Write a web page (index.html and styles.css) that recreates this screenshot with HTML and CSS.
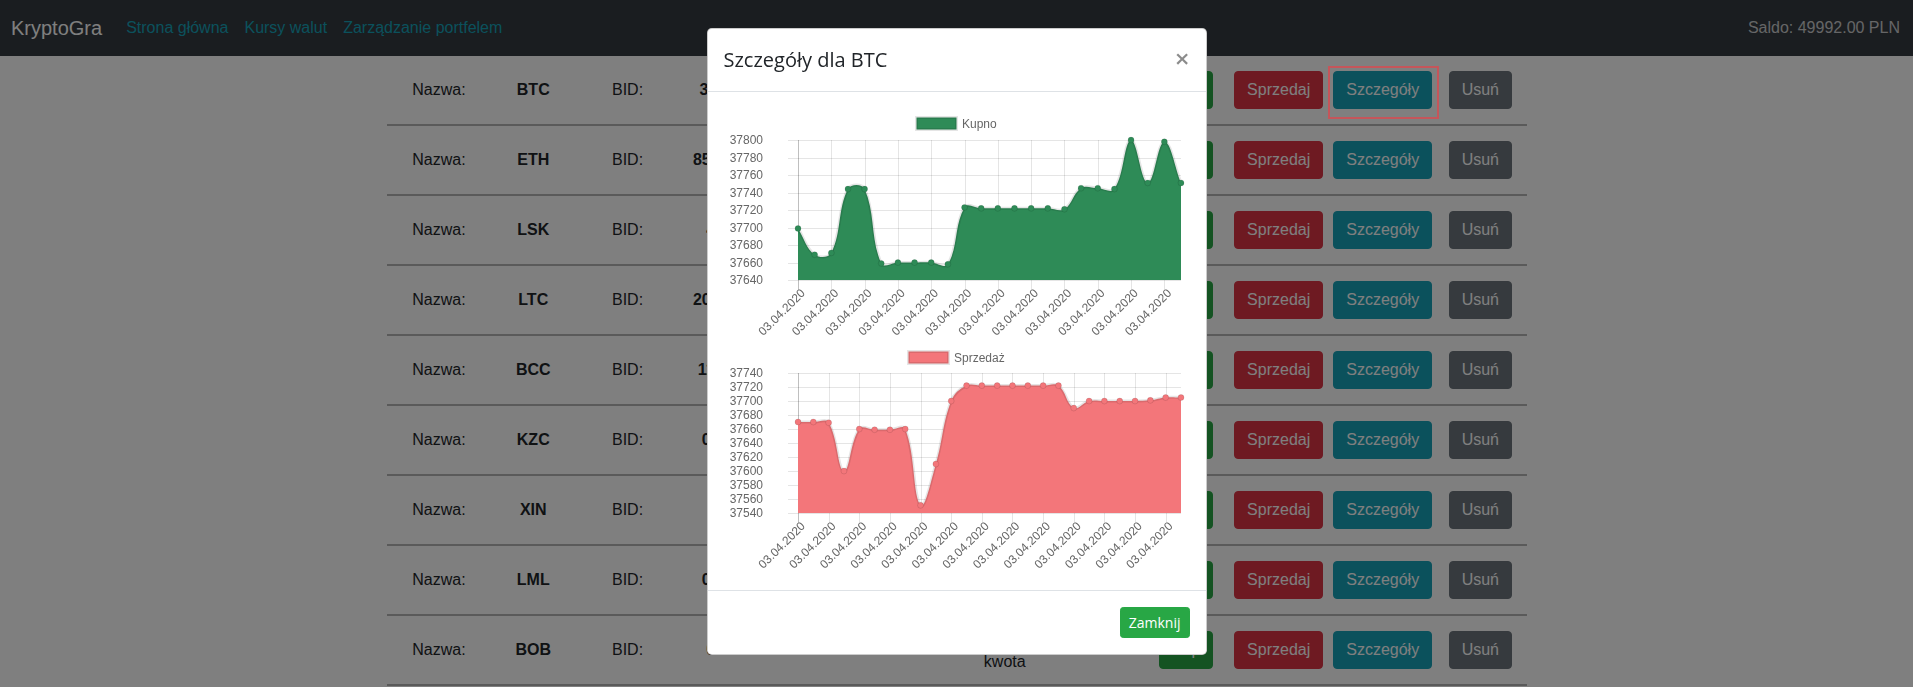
FILE: index.html
```html
<!DOCTYPE html>
<html lang="pl">
<head>
<meta charset="utf-8">
<title>KryptoGra</title>
<link rel="stylesheet" href="styles.css">
</head>
<body>
<nav class="navbar">
  <a class="brand" href="#">KryptoGra</a>
  <ul class="nav">
    <li><a href="#">Strona główna</a></li>
    <li><a href="#">Kursy walut</a></li>
    <li><a href="#">Zarządzanie portfelem</a></li>
  </ul>
  <span class="saldo">Saldo: 49992.00 PLN</span>
</nav>

<main class="container">
  <div class="coin-row"><span>Nazwa:</span><b>BTC</b><span>BID:</span><b>37699</b><span>ASK:</span><b>37722</b><span class="two-line">Posiadana kwota</span><span>0</span><button class="btn btn-success">Kup</button><button class="btn btn-danger">Sprzedaj</button><button class="btn btn-info highlight">Szczegóły</button><button class="btn btn-secondary">Usuń</button></div>
  <div class="coin-row"><span>Nazwa:</span><b>ETH</b><span>BID:</span><b>859.123</b><span>ASK:</span><b>861.452</b><span class="two-line">Posiadana kwota</span><span>0</span><button class="btn btn-success">Kup</button><button class="btn btn-danger">Sprzedaj</button><button class="btn btn-info">Szczegóły</button><button class="btn btn-secondary">Usuń</button></div>
  <div class="coin-row"><span>Nazwa:</span><b>LSK</b><span>BID:</span><b>4.01</b><span>ASK:</span><b>4.06</b><span class="two-line">Posiadana kwota</span><span>0</span><button class="btn btn-success">Kup</button><button class="btn btn-danger">Sprzedaj</button><button class="btn btn-info">Szczegóły</button><button class="btn btn-secondary">Usuń</button></div>
  <div class="coin-row"><span>Nazwa:</span><b>LTC</b><span>BID:</span><b>205.481</b><span>ASK:</span><b>206.112</b><span class="two-line">Posiadana kwota</span><span>0</span><button class="btn btn-success">Kup</button><button class="btn btn-danger">Sprzedaj</button><button class="btn btn-info">Szczegóły</button><button class="btn btn-secondary">Usuń</button></div>
  <div class="coin-row"><span>Nazwa:</span><b>BCC</b><span>BID:</span><b>1102.4</b><span>ASK:</span><b>1108.7</b><span class="two-line">Posiadana kwota</span><span>0</span><button class="btn btn-success">Kup</button><button class="btn btn-danger">Sprzedaj</button><button class="btn btn-info">Szczegóły</button><button class="btn btn-secondary">Usuń</button></div>
  <div class="coin-row"><span>Nazwa:</span><b>KZC</b><span>BID:</span><b>0.084</b><span>ASK:</span><b>0.086</b><span class="two-line">Posiadana kwota</span><span>0</span><button class="btn btn-success">Kup</button><button class="btn btn-danger">Sprzedaj</button><button class="btn btn-info">Szczegóły</button><button class="btn btn-secondary">Usuń</button></div>
  <div class="coin-row"><span>Nazwa:</span><b>XIN</b><span>BID:</span><b>0.5</b><span>ASK:</span><b>0.6</b><span class="two-line">Posiadana kwota</span><span>0</span><button class="btn btn-success">Kup</button><button class="btn btn-danger">Sprzedaj</button><button class="btn btn-info">Szczegóły</button><button class="btn btn-secondary">Usuń</button></div>
  <div class="coin-row"><span>Nazwa:</span><b>LML</b><span>BID:</span><b>0.032</b><span>ASK:</span><b>0.035</b><span class="two-line">Posiadana kwota</span><span>0</span><button class="btn btn-success">Kup</button><button class="btn btn-danger">Sprzedaj</button><button class="btn btn-info">Szczegóły</button><button class="btn btn-secondary">Usuń</button></div>
  <div class="coin-row"><span>Nazwa:</span><b>BOB</b><span>BID:</span><b>0.07</b><span>ASK:</span><b>0.07</b><span class="two-line">Posiadana kwota</span><span>0</span><button class="btn btn-success">Kup</button><button class="btn btn-danger">Sprzedaj</button><button class="btn btn-info">Szczegóły</button><button class="btn btn-secondary">Usuń</button></div>
</main>

<div class="backdrop"></div>

<div class="modal">
  <div class="modal-dialog">
    <div class="modal-content">
      <div class="modal-header">
        <h5 class="modal-title">Szczegóły dla BTC</h5>
        <button class="close" type="button">×</button>
      </div>
      <div class="modal-body">
        <svg class="chart chart-buy" width="466" height="233" viewBox="0 0 466 233"
             data-min="37640" data-max="37800"
             data-values="37699,37669,37671,37744,37744,37659,37660,37660,37660,37658,37723,37722,37722,37722,37722,37722,37721,37745,37745,37744,37800,37751,37798,37751">
          <g class="grid"></g>
          <g class="y-labels">
            <text x="39" y="36">37800</text>
            <text x="39" y="53.5">37780</text>
            <text x="39" y="71">37760</text>
            <text x="39" y="88.5">37740</text>
            <text x="39" y="106">37720</text>
            <text x="39" y="123.5">37700</text>
            <text x="39" y="141">37680</text>
            <text x="39" y="158.5">37660</text>
            <text x="39" y="176">37640</text>
          </g>
          <g class="x-labels">
            <text transform="translate(79,183) rotate(-45)">03.04.2020</text>
            <text transform="translate(112.3,183) rotate(-45)">03.04.2020</text>
            <text transform="translate(145.6,183) rotate(-45)">03.04.2020</text>
            <text transform="translate(178.9,183) rotate(-45)">03.04.2020</text>
            <text transform="translate(212.2,183) rotate(-45)">03.04.2020</text>
            <text transform="translate(245.5,183) rotate(-45)">03.04.2020</text>
            <text transform="translate(278.8,183) rotate(-45)">03.04.2020</text>
            <text transform="translate(312.1,183) rotate(-45)">03.04.2020</text>
            <text transform="translate(345.4,183) rotate(-45)">03.04.2020</text>
            <text transform="translate(378.7,183) rotate(-45)">03.04.2020</text>
            <text transform="translate(412,183) rotate(-45)">03.04.2020</text>
            <text transform="translate(445.3,183) rotate(-45)">03.04.2020</text>
          </g>
          <path class="area"></path>
          <path class="line"></path>
          <g class="points"></g>
          <g class="legend">
            <rect x="192.5" y="9.5" width="40" height="12"></rect>
            <text x="238" y="19.5">Kupno</text>
          </g>
        </svg>
        <svg class="chart chart-sell" width="466" height="233" viewBox="0 0 466 233"
             data-min="37540" data-max="37740"
             data-values="37670,37670,37669,37600,37660,37659,37659,37660,37551,37610,37700,37722,37722,37722,37722,37722,37722,37722,37690,37700,37700,37700,37700,37701,37705,37705">
          <g class="grid"></g>
          <g class="y-labels">
            <text x="39" y="36">37740</text>
            <text x="39" y="50">37720</text>
            <text x="39" y="64">37700</text>
            <text x="39" y="78">37680</text>
            <text x="39" y="92">37660</text>
            <text x="39" y="106">37640</text>
            <text x="39" y="120">37620</text>
            <text x="39" y="134">37600</text>
            <text x="39" y="148">37580</text>
            <text x="39" y="162">37560</text>
            <text x="39" y="176">37540</text>
          </g>
          <g class="x-labels">
            <text transform="translate(79,183) rotate(-45)">03.04.2020</text>
            <text transform="translate(109.6,183) rotate(-45)">03.04.2020</text>
            <text transform="translate(140.3,183) rotate(-45)">03.04.2020</text>
            <text transform="translate(170.9,183) rotate(-45)">03.04.2020</text>
            <text transform="translate(201.6,183) rotate(-45)">03.04.2020</text>
            <text transform="translate(232.2,183) rotate(-45)">03.04.2020</text>
            <text transform="translate(262.8,183) rotate(-45)">03.04.2020</text>
            <text transform="translate(293.5,183) rotate(-45)">03.04.2020</text>
            <text transform="translate(324.1,183) rotate(-45)">03.04.2020</text>
            <text transform="translate(354.8,183) rotate(-45)">03.04.2020</text>
            <text transform="translate(385.4,183) rotate(-45)">03.04.2020</text>
            <text transform="translate(416,183) rotate(-45)">03.04.2020</text>
            <text transform="translate(446.7,183) rotate(-45)">03.04.2020</text>
          </g>
          <path class="area"></path>
          <path class="line"></path>
          <g class="points"></g>
          <g class="legend">
            <rect x="184.5" y="10.5" width="40" height="12"></rect>
            <text x="230" y="20.5">Sprzedaż</text>
          </g>
        </svg>
      </div>
      <div class="modal-footer">
        <button class="btn-sm" type="button">Zamknij</button>
      </div>
    </div>
  </div>
</div>

<script src="charts.js"></script>
</body>
</html>
```

FILE: styles.css
```css
* {
  box-sizing: border-box;
}

html,
body {
  margin: 0;
  padding: 0;
}

body {
  font-family: "Liberation Sans", Arial, sans-serif;
  font-size: 16px;
  line-height: 1.5;
  color: #212529;
  background: #fff;
  height: 687px;
  overflow: hidden;
}

/* ---------- navbar ---------- */
.navbar {
  display: flex;
  align-items: center;
  height: 56px;
  padding: 0 13px 0 11px;
  background: #343a40;
}

.brand {
  font-size: 20px;
  line-height: 30px;
  color: #fff;
  margin-right: 16px;
  text-decoration: none;
}

.nav {
  display: flex;
  list-style: none;
  margin: 0;
  padding: 0;
}

.nav a {
  display: block;
  padding: 8px;
  color: #17a2b8;
  text-decoration: none;
}

.saldo {
  margin-left: auto;
  color: rgba(255, 255, 255, 0.75);
}

/* ---------- list of coins ---------- */
.container {
  width: 1140px;
  margin: 0 auto;
}

.coin-row {
  display: grid;
  grid-template-columns: repeat(8, 94.3px) 80px 105px 103px 1fr;
  padding-left: 5.3px;
  height: 70px;
  border-bottom: 2px solid #b4b4b4;
  align-items: center;
  justify-items: center;
  text-align: center;
}

.coin-row b {
  font-weight: 700;
}

.btn {
  position: relative;
  display: inline-block;
  font: inherit;
  line-height: 24px;
  padding: 6px 12px;
  border: 1px solid transparent;
  border-radius: 4px;
  color: #fff;
  cursor: pointer;
}

.btn-success {
  background: #28a745;
  border-color: #28a745;
}

.btn-danger {
  background: #dc3545;
  border-color: #dc3545;
}

.btn-info {
  background: #17a2b8;
  border-color: #17a2b8;
}

.btn-secondary {
  background: #6c757d;
  border-color: #6c757d;
}

/* annotation frame drawn above the dimmed page */
.highlight::after {
  content: "";
  position: absolute;
  top: -6px;
  left: -6px;
  right: -8px;
  bottom: -11px;
  border: 2px solid #c5555a;
  z-index: 1045;
}

/* ---------- modal ---------- */
.backdrop {
  position: fixed;
  inset: 0;
  background: #000;
  opacity: 0.5;
  z-index: 1040;
}

.modal {
  position: fixed;
  inset: 0;
  z-index: 1050;
}

.modal-dialog {
  width: 500px;
  margin: 28px auto;
}

.modal-content {
  display: flex;
  flex-direction: column;
  background: #fff;
  border: 1px solid rgba(0, 0, 0, 0.2);
  border-radius: 4.8px;
}

.modal-header {
  display: flex;
  align-items: flex-start;
  padding: 16px;
  border-bottom: 1px solid #dee2e6;
}

.modal-title {
  margin: 0;
  font-family: "Segoe UI", "Open Sans", sans-serif;
  font-size: 20px;
  font-weight: 500;
  line-height: 30px;
  color: #212529;
}

.close {
  margin: -16px -16px -16px auto;
  padding: 16px;
  background: transparent;
  border: 0;
  font-family: "Segoe UI", "Open Sans", sans-serif;
  font-size: 26px;
  font-weight: 600;
  line-height: 1;
  color: #000;
  opacity: 0.45;
  text-shadow: 0 1px 0 #fff;
}

.modal-body {
  padding: 16px;
}

.chart {
  display: block;
}

.chart text {
  font-family: "Liberation Sans", Arial, sans-serif;
  font-size: 12px;
  fill: #666;
}

.y-labels text {
  text-anchor: end;
}

.x-labels text {
  text-anchor: end;
  dominant-baseline: central;
}

.gl {
  stroke: rgba(0, 0, 0, 0.1);
  stroke-width: 1;
}

.gl.zero {
  stroke: rgba(0, 0, 0, 0.25);
}

.line {
  fill: none;
  stroke: rgba(0, 0, 0, 0.1);
  stroke-width: 3;
}

.points circle {
  stroke: rgba(0, 0, 0, 0.1);
  stroke-width: 1;
}

.legend rect {
  stroke: rgba(0, 0, 0, 0.1);
  stroke-width: 3;
}

.chart-buy .area,
.chart-buy .points circle,
.chart-buy .legend rect {
  fill: #2e8b57;
}

.chart-sell .area,
.chart-sell .points circle,
.chart-sell .legend rect {
  fill: #f3767a;
}

.modal-footer {
  display: flex;
  justify-content: flex-end;
  padding: 12px;
  border-top: 1px solid #dee2e6;
}

.btn-sm {
  margin: 4px;
  padding: 4px 8px;
  font-family: "Segoe UI", "Open Sans", sans-serif;
  font-size: 14px;
  line-height: 21px;
  color: #fff;
  background: #28a745;
  border: 1px solid #28a745;
  border-radius: 3.2px;
}
```

FILE: charts.js
```js
(function () {
  var NS = 'http://www.w3.org/2000/svg';
  var L = 74, R = 457, T = 32, B = 172;

  function el(name, attrs, parent) {
    var e = document.createElementNS(NS, name);
    for (var k in attrs) e.setAttribute(k, attrs[k]);
    parent.appendChild(e);
    return e;
  }

  function clamp(v, a, b) {
    return Math.max(a, Math.min(b, v));
  }

  document.querySelectorAll('svg.chart').forEach(function (svg) {
    var vals = svg.getAttribute('data-values').split(',').map(Number);
    var min = +svg.getAttribute('data-min');
    var max = +svg.getAttribute('data-max');
    var ySteps = (max - min) / 20;
    var n = vals.length;
    var step = (R - L) / (n - 1);
    var grid = svg.querySelector('.grid');
    var k, i;

    for (k = 0; k <= ySteps; k++) {
      var y = Math.round(T + k * (B - T) / ySteps) + 0.5;
      el('line', { x1: L - 10, x2: R, y1: y, y2: y, 'class': 'gl' }, grid);
    }
    for (i = 0; i < n; i += 2) {
      var x = Math.round(L + i * step) + 0.5;
      el('line', { x1: x, x2: x, y1: T, y2: B + 10, 'class': i === 0 ? 'gl zero' : 'gl' }, grid);
    }

    var pts = vals.map(function (v, j) {
      return { x: L + j * step, y: T + (max - v) / (max - min) * (B - T) };
    });

    var t = 0.4;
    pts.forEach(function (p, j) {
      var prev = pts[j - 1] || p;
      var next = pts[j + 1] || p;
      var d01 = Math.hypot(p.x - prev.x, p.y - prev.y);
      var d12 = Math.hypot(next.x - p.x, next.y - p.y);
      var s01 = d01 / (d01 + d12);
      var s12 = d12 / (d01 + d12);
      if (isNaN(s01)) s01 = 0;
      if (isNaN(s12)) s12 = 0;
      var fa = t * s01, fb = t * s12;
      p.px = clamp(p.x - fa * (next.x - prev.x), L, R);
      p.py = clamp(p.y - fa * (next.y - prev.y), T, B);
      p.nx = clamp(p.x + fb * (next.x - prev.x), L, R);
      p.ny = clamp(p.y + fb * (next.y - prev.y), T, B);
    });

    var d = 'M' + pts[0].x + ' ' + pts[0].y;
    for (i = 1; i < n; i++) {
      var a = pts[i - 1], b = pts[i];
      d += ' C' + a.nx + ' ' + a.ny + ' ' + b.px + ' ' + b.py + ' ' + b.x + ' ' + b.y;
    }
    svg.querySelector('.area').setAttribute('d', d + ' L' + R + ' ' + B + ' L' + L + ' ' + B + ' Z');
    svg.querySelector('.line').setAttribute('d', d);

    var g = svg.querySelector('.points');
    pts.forEach(function (p) {
      el('circle', { cx: p.x, cy: p.y, r: 3 }, g);
    });
  });
})();
```
